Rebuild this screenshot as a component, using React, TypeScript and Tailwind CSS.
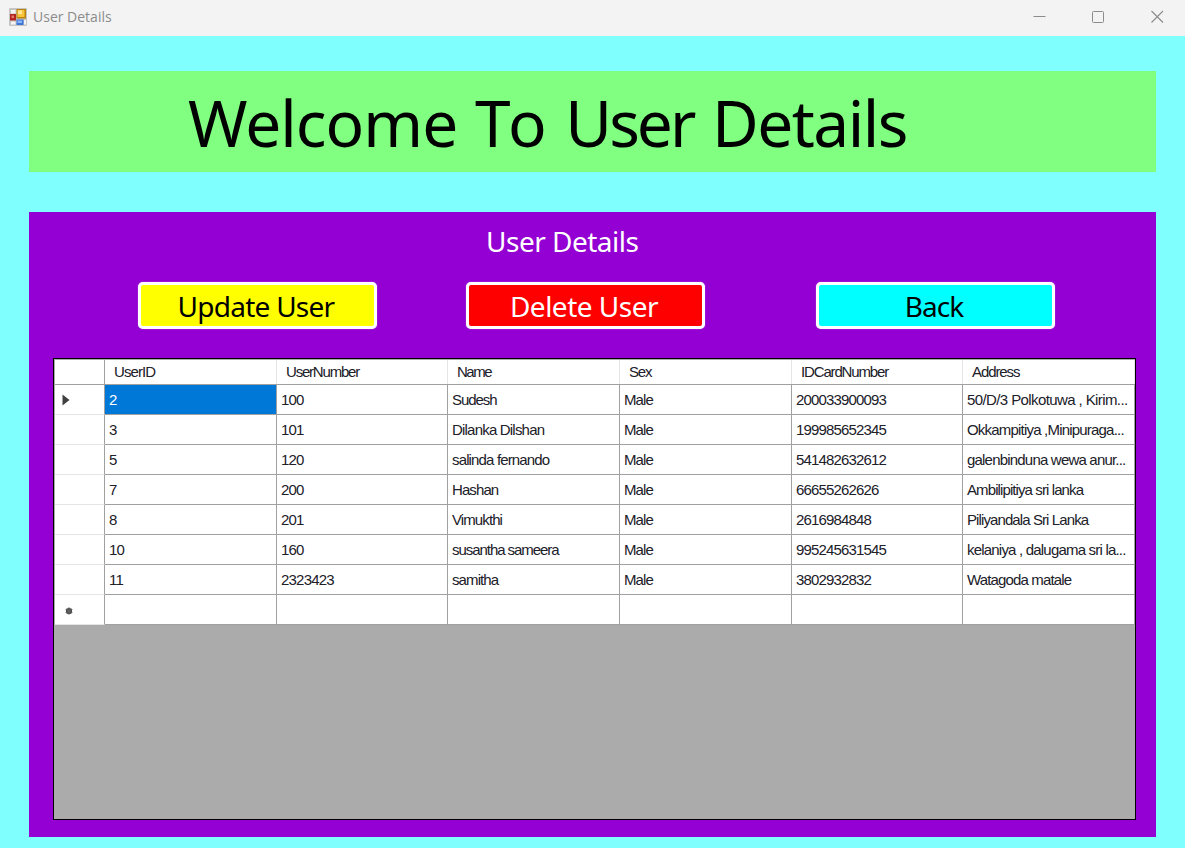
import React from "react";

type Cell = [text: string, tracking: string];

const headers: Cell[] = [
  ["UserID", "tracking-[-0.9px]"],
  ["UserNumber", "tracking-[-1.2px]"],
  ["Name", "tracking-[-1.5px]"],
  ["Sex", "tracking-[-1.2px]"],
  ["IDCardNumber", "tracking-[-1.15px]"],
  ["Address", "tracking-[-1.1px]"],
];

const N = "tracking-[-0.8px]";
const D = "tracking-[-0.85px]";
const T = "tracking-[-0.9px]";
const M = "tracking-[-1.05px]";
const L = "tracking-[-0.6px]";

const rows: Cell[][] = [
  [["2", N], ["100", N], ["Sudesh", M], ["Male", T], ["200033900093", D], ["50/D/3 Polkotuwa , Kirim...", L]],
  [["3", N], ["101", N], ["Dilanka Dilshan", N], ["Male", T], ["199985652345", D], ["Okkampitiya ,Minipuraga...", N]],
  [["5", N], ["120", N], ["salinda fernando", D], ["Male", T], ["541482632612", D], ["galenbinduna wewa anur...", N]],
  [["7", N], ["200", N], ["Hashan", T], ["Male", T], ["66655262626", D], ["Ambilipitiya sri lanka", T]],
  [["8", N], ["201", N], ["Vimukthi", T], ["Male", T], ["2616984848", D], ["Piliyandala Sri Lanka", T]],
  [["10", N], ["160", N], ["susantha sameera", M], ["Male", T], ["995245631545", D], ["kelaniya , dalugama sri la...", N]],
  [["11", N], ["2323423", N], ["samitha", T], ["Male", T], ["3802932832", D], ["Watagoda matale", D]],
  [["", N], ["", N], ["", N], ["", N], ["", N], ["", N]],
];

const gridCols = "grid grid-cols-[50px_172px_171px_172px_172px_171px_172px]";

function AppIcon() {
  return (
    <svg width="18" height="18" viewBox="0 0 18 18" className="shrink-0">
      <rect width="18" height="18" rx="1" fill="#c4c4c4" />
      <rect x="2" y="2" width="4.5" height="3.5" fill="#f4f4f4" />
      <rect x="2" y="13.5" width="4.5" height="3" fill="#f4f4f4" />
      <rect x="15" y="12" width="2" height="4.5" fill="#f4f4f4" />
      <rect x="1" y="6" width="6" height="6.5" fill="#b3261e" />
      <rect x="2.5" y="7.5" width="2.5" height="2.5" fill="#e07a70" />
      <rect x="7.5" y="1" width="9.5" height="9.5" fill="#b9820a" />
      <rect x="8.5" y="2" width="7" height="7" fill="#f7c53b" />
      <rect x="9" y="2.5" width="4" height="3.5" fill="#ffe595" />
      <rect x="7.5" y="11.5" width="7" height="5.5" fill="#3c74d8" />
      <rect x="8.5" y="12.5" width="4.5" height="2.5" fill="#8db4f5" />
    </svg>
  );
}

function TitleBar() {
  return (
    <header className="flex h-9 items-center bg-[#f3f3f3] pl-[9px] pb-[3px] text-[#8c8c8c]">
      <AppIcon />
      <span className="ml-1.5 flex-1 font-['Open_Sans',sans-serif] text-[14px] leading-5">User Details</span>
      <div className="flex h-[13px] items-center gap-[46px] pr-[21px]">
        <svg width="13" height="13" fill="none" stroke="currentColor"><path d="M0.5 6.5h12" /></svg>
        <svg width="13" height="13" fill="none" stroke="currentColor"><rect x="0.5" y="1.5" width="11" height="11" rx="1" /></svg>
        <svg width="13" height="13" fill="none" stroke="currentColor"><path d="M0.5 1l11.5 11.5M12 1l-11.5 11.5" strokeWidth="1.1" /></svg>
      </div>
    </header>
  );
}

function ActionButton({ label, look }: { label: string; look: string }) {
  return (
    <button
      className={`flex h-[47px] w-[239px] items-center justify-center rounded-[5px] border-[3px] border-white pr-[3px] font-['Noto_Sans',sans-serif] text-[28px] leading-none shadow-[0_0_1px_#d9b3ee] ${look}`}
    >
      {label}
    </button>
  );
}

function DataGrid() {
  return (
    <div className="h-[462px] w-[1083px] overflow-hidden border border-black bg-[#ababab] pt-px pl-px font-['Liberation_Sans',sans-serif] text-[15px] whitespace-nowrap text-[#202028]">
      <div className={`${gridCols} h-[25px] bg-white`}>
        <div className="border-r border-b border-[#a0a0a0]" />
        {headers.map(([text, tracking]) => (
          <div key={text} className="border-b border-[#a0a0a0]">
            <div className={`h-6 border-r border-[#e5e5e5] pl-[9px] leading-6 ${tracking}`}>{text}</div>
          </div>
        ))}
      </div>
      {rows.map((row, r) => (
        <div key={r} className={`${gridCols} h-[30px] bg-white`}>
          <div className="flex items-center border-r border-r-[#a0a0a0] border-b border-b-[#e5e5e5] pl-[7px]">
            {r === 0 && (
              <svg width="8" height="12" className="mt-px"><path d="M0.5 0.5L7.5 6L0.5 11.5Z" fill="#404040" /></svg>
            )}
            {r === 7 && (
              <svg width="8" height="8" className="mt-0.5 ml-[3px]" stroke="#606060" strokeWidth="1.5">
                <circle cx="4" cy="4" r="3.1" fill="#404040" stroke="none" />
                <path d="M4 0.5v7M0.8 2.2l6.4 3.6M7.2 2.2L0.8 5.8" />
              </svg>
            )}
          </div>
          {row.map(([text, tracking], c) => (
            <div
              key={c}
              className={`border-r border-b border-[#a0a0a0] pl-1 leading-[29px] ${tracking} ${r === 0 && c === 0 ? "bg-[#0078d7] text-white" : ""}`}
            >
              {text}
            </div>
          ))}
        </div>
      ))}
    </div>
  );
}

export default function App() {
  return (
    <div className="h-[848px] w-[1185px] overflow-hidden bg-[#80ffff]">
      <TitleBar />
      <main className="px-[29px] pt-[35px]">
        <h1 className="h-[101px] bg-[#80ff80] pl-[159px] font-['Noto_Sans',sans-serif] text-[64px] leading-[104px] whitespace-nowrap text-black">
          <span className="tracking-[-1px]">Welcome</span>{" "}
          <span className="ml-[1px] tracking-[2px]">To</span>{" "}
          <span className="tracking-[-3px]">User</span>{" "}
          <span className="ml-[2px] tracking-[-1.5px]">Details</span>
        </h1>
        <section className="mt-10 h-[625px] w-[1127px] bg-[#9400d3]">
          <h2 className="h-[70px] pl-[457px] font-['Noto_Sans',sans-serif] text-[28px] leading-[58px] tracking-[-0.5px] whitespace-nowrap text-white">User Details</h2>
          <div className="flex pl-[109px]">
            <ActionButton label="Update User" look="bg-[#ffff00] text-black tracking-[-0.75px]" />
            <div className="w-[89px]" />
            <ActionButton label="Delete User" look="bg-[#ff0000] text-white tracking-[-0.5px]" />
            <div className="w-[111px]" />
            <ActionButton label="Back" look="bg-[#00ffff] text-black tracking-[-0.9px]" />
          </div>
          <div className="pt-[29px] pl-6">
            <DataGrid />
          </div>
        </section>
      </main>
    </div>
  );
}
